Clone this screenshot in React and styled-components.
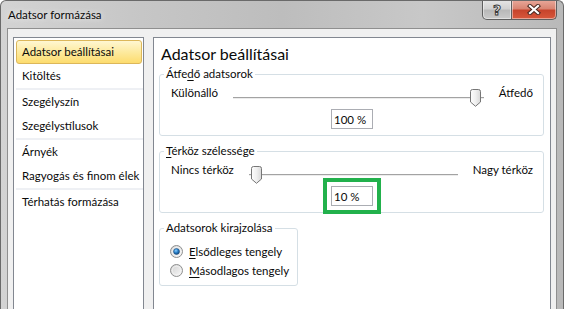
import React from "react";
import styled, { createGlobalStyle } from "styled-components";

const GlobalStyle = createGlobalStyle`
  html, body {
    margin: 0;
    padding: 0;
    background: #fff;
  }
  body {
    font-family: Lato, "Noto Sans", sans-serif;
    font-size: 11.5px;
    color: #0a0a0a;
  }
`;

const Window = styled.div`
  box-sizing: border-box;
  width: 564px;
  height: 309px;
  overflow: hidden;
  display: flex;
  flex-direction: column;
  border: 1px solid #6a6a6a;
  border-bottom: none;
  border-radius: 6px 6px 0 0;
  background: linear-gradient(90deg, #d3d3d3 0%, #c6c6c6 25%, #bdbdbd 50%, #c8c8c8 75%, #b9b9b9 100%);
`;

const TitleBar = styled.div`
  height: 27px;
  flex-shrink: 0;
  display: flex;
  align-items: flex-start;
`;

const Title = styled.div`
  margin: 6px 0 0 7px;
  font-size: 11.5px;
  line-height: 16px;
  text-shadow: 0 0 6px rgba(255, 255, 255, 0.9);
`;

const Controls = styled.div`
  margin: -1px 6px 0 auto;
  display: flex;
`;

const CaptionButton = styled.div`
  box-sizing: border-box;
  height: 20px;
  width: ${({ $wide }) => ($wide ? "45px" : "30px")};
  display: flex;
  align-items: center;
  justify-content: center;
  border: 1px solid #5f5f5f;
  border-top: none;
  border-radius: ${({ $wide }) => ($wide ? "0 0 5px 0" : "0 0 0 5px")};
  background: ${({ $wide }) =>
    $wide
      ? "linear-gradient(180deg, #e9a99b 0%, #d98573 45%, #c7442c 55%, #d8583c 100%)"
      : "linear-gradient(180deg, #e6e6e6 0%, #d2d2d2 45%, #b9b9b9 55%, #cacaca 100%)"};
  box-shadow: inset 0 0 0 1px rgba(255, 255, 255, 0.45);
  & + & {
    border-left: none;
  }
`;

const HelpGlyph = styled.span`
  font-family: "DejaVu Sans", sans-serif;
  font-weight: bold;
  font-size: 14px;
  line-height: 14px;
  color: #f4f4f4;
  -webkit-text-stroke: 1px #3a3a3a;
`;

const Client = styled.div`
  flex: 1;
  margin: 0 6px;
  border: 1px solid #8f8f8f;
  border-bottom: none;
  background: #f0f0f0;
  display: flex;
  gap: 9px;
  padding: 8px 5px 0 5px;
  min-height: 0;
`;

const NavList = styled.div`
  box-sizing: border-box;
  width: 131px;
  flex-shrink: 0;
  background: #fff;
  border: 1px solid #828790;
  border-bottom: none;
  padding: 2px 0 0 2px;
`;

const NavItem = styled.div`
  box-sizing: border-box;
  height: 24px;
  line-height: ${({ $active }) => ($active ? "22px" : "24px")};
  padding-left: ${({ $active }) => ($active ? "5px" : "6px")};
  white-space: nowrap;
  border: ${({ $active }) => ($active ? "1px solid #dcb75a" : "none")};
  border-radius: 3px;
  margin-right: ${({ $active }) => ($active ? "1px" : "0")};
  background: ${({ $active }) =>
    $active ? "linear-gradient(180deg, #fff7d2 0%, #fdea9f 50%, #fddc6e 100%)" : "transparent"};
`;

const NavSeparator = styled.div`
  height: 2px;
  background: #eef0f4;
`;

const Page = styled.div`
  flex: 1;
  background: #fff;
  border: 1px solid #828790;
  border-bottom: none;
  padding: 6px 6px 0 5px;
  display: flex;
  flex-direction: column;
`;

const PageTitle = styled.h1`
  margin: 0 0 2px 2px;
  font-size: 16px;
  line-height: 20px;
  font-weight: 400;
`;

const Group = styled.fieldset`
  box-sizing: border-box;
  margin: ${({ $first }) => ($first ? "0" : "7px 0 0 0")};
  padding: ${({ $radios }) => ($radios ? "6px 10px 5px 10px" : "3px 10px 6px 11px")};
  border: 1px solid #d5dfe5;
  border-radius: 3px;
  min-width: 0;
  width: ${({ $narrow }) => ($narrow ? "139px" : "auto")};
  align-self: ${({ $narrow }) => ($narrow ? "flex-start" : "stretch")};
`;

const Legend = styled.legend`
  padding: 0 2px;
  margin-left: ${({ $radios }) => ($radios ? "-6px" : "-7px")};
  line-height: 16px;
  white-space: nowrap;
`;

const Key = styled.u`
  text-decoration: underline;
  text-underline-offset: 2px;
`;

const SliderRow = styled.div`
  display: grid;
  grid-template-columns: auto 1fr auto;
  column-gap: 15px;
  height: 24px;
  align-items: start;
`;

const SliderLabel = styled.span`
  line-height: 16px;
  white-space: nowrap;
`;

const Slider = styled.div`
  position: relative;
  height: 18px;
  margin-top: 4px;
  &::before {
    content: "";
    position: absolute;
    left: 0;
    right: 0;
    top: 8px;
    height: 1px;
    background: #a3a3a3;
    box-shadow: 0 1px 0 #ececec;
  }
`;

const Thumb = styled.svg`
  position: absolute;
  top: 0;
  width: 11px;
  height: 18px;
  display: block;
`;

const ValueRow = styled.div`
  display: flex;
  justify-content: center;
`;

const ValueBox = styled.input`
  box-sizing: border-box;
  width: 42px;
  height: 20px;
  border: 1px solid #abadb3;
  padding: 0 2px;
  font: inherit;
  color: inherit;
  line-height: 18px;
  background: #fff;
  outline: ${({ $marked }) => ($marked ? "4px solid #22b14c" : "none")};
  outline-offset: 4px;
`;

const RadioRow = styled.label`
  height: 19px;
  display: flex;
  align-items: center;
  white-space: nowrap;
`;

const RadioMark = styled.svg`
  flex: none;
  width: 13px;
  height: 13px;
  display: block;
`;

const RadioText = styled.span`
  margin-left: 6px;
  line-height: 16px;
`;

const navGroups = [
  ["Adatsor beállításai", "Kitöltés"],
  ["Szegélyszín", "Szegélystílusok"],
  ["Árnyék", "Ragyogás és finom élek"],
  ["Térhatás formázása"],
];

const CloseIcon = () => (
  <svg width="14" height="11" viewBox="0 0 14 11">
    <path d="M3 2 L11 9 M11 2 L3 9" stroke="#4a2a22" strokeWidth="4.2" strokeLinecap="square" />
    <path d="M3 2 L11 9 M11 2 L3 9" stroke="#fff" strokeWidth="2.2" strokeLinecap="square" />
  </svg>
);

const SliderThumb = ({ value, id }) => (
  <Thumb viewBox="0 0 11 18" style={{ left: `calc(${value} * (100% - 16px) + 2.5px)` }}>
    <defs>
      <linearGradient id={id} x1="0" y1="0" x2="1" y2="0">
        <stop offset="0" stopColor="#fdfdfd" />
        <stop offset="0.5" stopColor="#f0f0f0" />
        <stop offset="1" stopColor="#d8d8d8" />
      </linearGradient>
    </defs>
    <path
      d="M0.5 2.5 Q0.5 0.5 2.5 0.5 H8.5 Q10.5 0.5 10.5 2.5 V13 L5.5 17.3 L0.5 13 Z"
      fill={`url(#${id})`}
      stroke="#767676"
    />
  </Thumb>
);

const Radio = ({ checked, id }) => (
  <RadioMark viewBox="0 0 13 13">
    <defs>
      <linearGradient id={`${id}-bg`} x1="0" y1="0" x2="1" y2="1">
        <stop offset="0" stopColor="#d0d0d0" />
        <stop offset="1" stopColor="#fafafa" />
      </linearGradient>
      <radialGradient id={`${id}-dot`} cx="0.4" cy="0.35" r="0.7">
        <stop offset="0" stopColor="#8ad0ff" />
        <stop offset="0.5" stopColor="#2a7fc8" />
        <stop offset="1" stopColor="#0d3f72" />
      </radialGradient>
    </defs>
    <circle cx="6.5" cy="6.5" r="6" fill={`url(#${id}-bg)`} stroke="#8e8f8f" />
    <circle cx="6.5" cy="6.5" r="4.3" fill="none" stroke="#f4f4f4" strokeWidth="0.8" />
    {checked && <circle cx="6.5" cy="6.5" r="3" fill={`url(#${id}-dot)`} stroke="#1c4f7f" strokeWidth="0.5" />}
  </RadioMark>
);

export default function App() {
  return (
    <>
      <GlobalStyle />
      <Window>
        <TitleBar>
          <Title>Adatsor formázása</Title>
          <Controls>
            <CaptionButton>
              <HelpGlyph>?</HelpGlyph>
            </CaptionButton>
            <CaptionButton $wide>
              <CloseIcon />
            </CaptionButton>
          </Controls>
        </TitleBar>
        <Client>
          <NavList>
            {navGroups.map((group, gi) => (
              <React.Fragment key={gi}>
                {gi > 0 && <NavSeparator />}
                {group.map((item) => (
                  <NavItem key={item} $active={item === "Adatsor beállításai"}>
                    {item}
                  </NavItem>
                ))}
              </React.Fragment>
            ))}
          </NavList>
          <Page>
            <PageTitle>Adatsor beállításai</PageTitle>
            <Group $first>
              <Legend>
                Átfe<Key>d</Key>ő adatsorok
              </Legend>
              <SliderRow>
                <SliderLabel>Különálló</SliderLabel>
                <Slider>
                  <SliderThumb value={1} id="thumbA" />
                </Slider>
                <SliderLabel>Átfedő</SliderLabel>
              </SliderRow>
              <ValueRow>
                <ValueBox readOnly defaultValue="100 %" />
              </ValueRow>
            </Group>
            <Group>
              <Legend>
                <Key>T</Key>érköz szélessége
              </Legend>
              <SliderRow>
                <SliderLabel>Nincs térköz</SliderLabel>
                <Slider>
                  <SliderThumb value={0} id="thumbB" />
                </Slider>
                <SliderLabel>Nagy térköz</SliderLabel>
              </SliderRow>
              <ValueRow>
                <ValueBox readOnly defaultValue="10 %" $marked />
              </ValueRow>
            </Group>
            <Group $narrow $radios>
              <Legend $radios>Adatsorok kirajzolása</Legend>
              <RadioRow>
                <Radio checked id="radioA" />
                <RadioText>
                  <Key>E</Key>lsődleges tengely
                </RadioText>
              </RadioRow>
              <RadioRow>
                <Radio id="radioB" />
                <RadioText>
                  <Key>M</Key>ásodlagos tengely
                </RadioText>
              </RadioRow>
            </Group>
          </Page>
        </Client>
      </Window>
    </>
  );
}
